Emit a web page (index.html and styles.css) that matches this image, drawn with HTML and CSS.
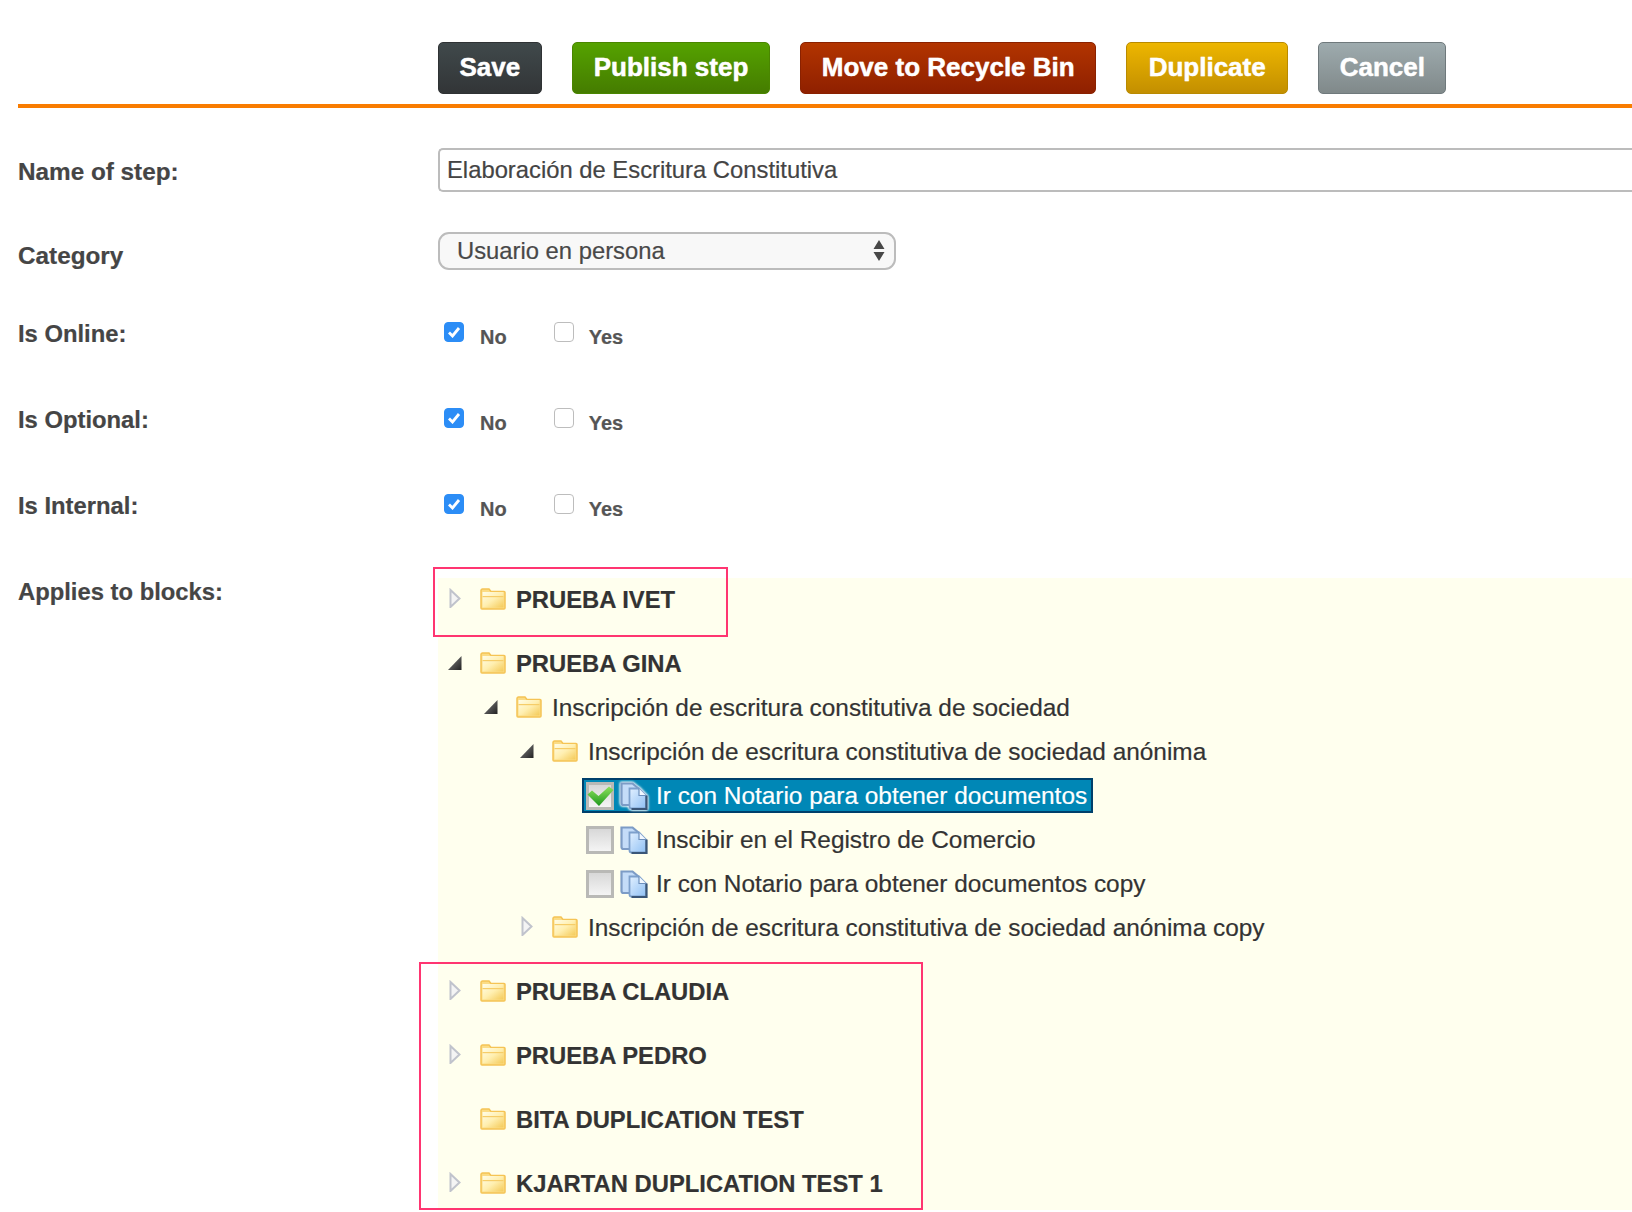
FILE: index.html
```html
<!DOCTYPE html>
<html lang="en">
<head>
<meta charset="utf-8">
<title>Edit step</title>
<link rel="stylesheet" href="styles.css">
</head>
<body>
<svg class="defs" width="0" height="0" aria-hidden="true">
  <defs>
    <linearGradient id="gFolder" x1="0" y1="0" x2="1" y2="1"><stop offset="0" stop-color="#fffde8"/><stop offset="0.5" stop-color="#ffefb0"/><stop offset="1" stop-color="#f4ca58"/></linearGradient>
    <linearGradient id="gPage" x1="0" y1="0" x2="1" y2="1"><stop offset="0" stop-color="#e2f0ff"/><stop offset="1" stop-color="#8fc0f4"/></linearGradient>
    <linearGradient id="gBox" x1="0" y1="0" x2="0" y2="1"><stop offset="0" stop-color="#d6d6d6"/><stop offset="1" stop-color="#f6f6f6"/></linearGradient>
    <linearGradient id="gCheck" x1="0" y1="0" x2="0" y2="1"><stop offset="0" stop-color="#8ee25e"/><stop offset="1" stop-color="#1d981d"/></linearGradient>
    <linearGradient id="gDark" x1="0" y1="0" x2="1" y2="1"><stop offset="0" stop-color="#888"/><stop offset="1" stop-color="#222"/></linearGradient>
    <symbol id="folder" viewBox="0 0 26 22">
      <path d="M1 20V2.500C1 1.600 1.600 1 2.500 1H9l2 2.500h13c.6 0 1 .4 1 1V20c0 .6-.4 1-1 1H2c-.6 0-1-.4-1-1z" fill="#fbdc85" stroke="#f5c455" stroke-width="1.500"/>
      <rect x="2.500" y="4" width="21" height="15.500" fill="url(#gFolder)"/>
      <rect x="2.500" y="8" width="21" height="1.200" fill="#f6cd68"/>
    </symbol>
    <symbol id="file" viewBox="0 0 28 28">
      <path d="M1.500 1.500h11L19 7v16H3.500c-1.200 0-2-.8-2-2z" fill="#c4dcf8" stroke="#7d9cc6" stroke-width="2.200"/>
      <path d="M9.500 6.500H19l7 7v13H11.500c-1.200 0-2-.8-2-2z" fill="url(#gPage)" stroke="#7da0cc" stroke-width="1.800"/>
      <path d="M26.500 13.500v13.500H11.500" fill="none" stroke="#3a5678" stroke-width="2.200"/>
      <path d="M19 6.500v7h7" fill="#f2f8ff" stroke="#6d8fbb" stroke-width="1.200"/>
    </symbol>
    <symbol id="box" viewBox="0 0 28 28">
      <rect x="1.500" y="1.500" width="25" height="25" fill="url(#gBox)" stroke="#b9b9b6" stroke-width="3"/>
    </symbol>
    <symbol id="tick" viewBox="0 0 28 28">
      <path d="M1.500 12.500l4.500-4 6.500 5.500L23 4.500l4.500 3.500L13 24z" fill="url(#gCheck)"/>
    </symbol>
    <symbol id="arrow-closed" viewBox="0 0 14 20">
      <path d="M2.500 2l9 8.500-9 8.500z" fill="#f4f4f4" stroke="#c0c3cc" stroke-width="2"/>
    </symbol>
    <symbol id="arrow-open" viewBox="0 0 14 20">
      <path d="M0 18L13.500 4v14z" fill="url(#gDark)"/>
    </symbol>
  </defs>
</svg>

<header class="toolbar">
  <button type="button" class="btn btn-save">Save</button>
  <button type="button" class="btn btn-publish">Publish step</button>
  <button type="button" class="btn btn-delete">Move to Recycle Bin</button>
  <button type="button" class="btn btn-duplicate">Duplicate</button>
  <button type="button" class="btn btn-cancel">Cancel</button>
</header>

<main class="form">
  <div class="row row-name">
    <div class="label">Name of step:</div>
    <input class="text-input" type="text" value="Elaboración de Escritura Constitutiva">
  </div>

  <div class="row row-category">
    <div class="label">Category</div>
    <div class="select">
      <span>Usuario en persona</span>
      <svg class="select-arrows" width="12" height="22" viewBox="0 0 12 22"><path d="M6 0l5.500 9H.5zM.5 12h11L6 21z"/></svg>
    </div>
  </div>

  <div class="row row-online">
    <div class="label">Is Online:</div>
    <div class="options">
      <span class="check is-on"><svg width="14" height="12" viewBox="0 0 14 12"><path d="M2 6.500l3.500 3.500L12 2" fill="none" stroke="#fff" stroke-width="2.800"/></svg></span><span class="opt-text">No</span>
      <span class="check check-yes"></span><span class="opt-text opt-yes">Yes</span>
    </div>
  </div>

  <div class="row row-optional">
    <div class="label">Is Optional:</div>
    <div class="options">
      <span class="check is-on"><svg width="14" height="12" viewBox="0 0 14 12"><path d="M2 6.500l3.500 3.500L12 2" fill="none" stroke="#fff" stroke-width="2.800"/></svg></span><span class="opt-text">No</span>
      <span class="check check-yes"></span><span class="opt-text opt-yes">Yes</span>
    </div>
  </div>

  <div class="row row-internal">
    <div class="label">Is Internal:</div>
    <div class="options">
      <span class="check is-on"><svg width="14" height="12" viewBox="0 0 14 12"><path d="M2 6.500l3.500 3.500L12 2" fill="none" stroke="#fff" stroke-width="2.800"/></svg></span><span class="opt-text">No</span>
      <span class="check check-yes"></span><span class="opt-text opt-yes">Yes</span>
    </div>
  </div>

  <div class="row row-blocks">
    <div class="label">Applies to blocks:</div>
    <div class="tree">
      <ul class="tree-list">
        <li class="root">
          <div class="node"><svg class="arrow"><use href="#arrow-closed"/></svg><svg class="folder"><use href="#folder"/></svg><span class="name">PRUEBA IVET</span></div>
        </li>
        <li class="root">
          <div class="node"><svg class="arrow"><use href="#arrow-open"/></svg><svg class="folder"><use href="#folder"/></svg><span class="name">PRUEBA GINA</span></div>
          <ul class="tree-sub">
            <li>
              <div class="node"><svg class="arrow"><use href="#arrow-open"/></svg><svg class="folder"><use href="#folder"/></svg><span>Inscripción de escritura constitutiva de sociedad</span></div>
              <ul class="tree-sub">
                <li>
                  <div class="node"><svg class="arrow"><use href="#arrow-open"/></svg><svg class="folder"><use href="#folder"/></svg><span>Inscripción de escritura constitutiva de sociedad anónima</span></div>
                  <ul class="tree-sub">
                    <li class="leaf"><div class="leaf-box is-selected"><svg class="leaf-icon"><use href="#box"/><use href="#tick"/></svg><svg class="leaf-icon file-icon"><use href="#file"/></svg><span>Ir con Notario para obtener documentos</span></div></li>
                    <li class="leaf"><div class="leaf-box"><svg class="leaf-icon"><use href="#box"/></svg><svg class="leaf-icon file-icon"><use href="#file"/></svg><span>Inscibir en el Registro de Comercio</span></div></li>
                    <li class="leaf"><div class="leaf-box"><svg class="leaf-icon"><use href="#box"/></svg><svg class="leaf-icon file-icon"><use href="#file"/></svg><span>Ir con Notario para obtener documentos copy</span></div></li>
                  </ul>
                </li>
                <li>
                  <div class="node"><svg class="arrow"><use href="#arrow-closed"/></svg><svg class="folder"><use href="#folder"/></svg><span>Inscripción de escritura constitutiva de sociedad anónima copy</span></div>
                </li>
              </ul>
            </li>
          </ul>
        </li>
        <li class="root">
          <div class="node"><svg class="arrow"><use href="#arrow-closed"/></svg><svg class="folder"><use href="#folder"/></svg><span class="name">PRUEBA CLAUDIA</span></div>
        </li>
        <li class="root">
          <div class="node"><svg class="arrow"><use href="#arrow-closed"/></svg><svg class="folder"><use href="#folder"/></svg><span class="name">PRUEBA PEDRO</span></div>
        </li>
        <li class="root">
          <div class="node"><span class="arrow"></span><svg class="folder"><use href="#folder"/></svg><span class="name">BITA DUPLICATION TEST</span></div>
        </li>
        <li class="root">
          <div class="node"><svg class="arrow"><use href="#arrow-closed"/></svg><svg class="folder"><use href="#folder"/></svg><span class="name">KJARTAN DUPLICATION TEST 1</span></div>
        </li>
      </ul>
      <div class="mark mark-one"></div>
      <div class="mark mark-two"></div>
    </div>
  </div>
</main>
</body>
</html>
```

FILE: styles.css
```css
html, body {
  margin: 0;
  padding: 0;
  overflow: hidden;
  background: #fff;
}
body {
  box-sizing: border-box;
  font-family: "Liberation Sans", Arial, sans-serif;
  font-size: 23.8px;
  color: #444;
  height: 1212px;
  padding-left: 18px;
  -webkit-text-stroke: 0.2px currentColor;
}
.defs { position: absolute; }

.toolbar {
  display: flex;
  gap: 30px;
  padding: 42px 0 10px 420px;
  border-bottom: 4px solid #f97c00;
}
.btn {
  height: 52px;
  padding: 0 20.5px 2px;
  border: 1px solid;
  border-radius: 5px;
  font: bold 26px "Liberation Sans", Arial, sans-serif;
  color: #fff;
  -webkit-text-stroke: 0.3px #fff;
  text-shadow: 0 0 1px rgba(255, 255, 255, .6);
}
.btn-save { background: linear-gradient(#40494b, #323537); border-color: #2f3234; }
.btn-publish { background: linear-gradient(#55a200, #457c00); border-color: #4a8600; padding: 0 21px 2px; }
.btn-delete { background: linear-gradient(#b23400, #8f2000); border-color: #8a2100; }
.btn-duplicate { background: linear-gradient(#edb600, #c38f00); border-color: #b98a00; padding: 0 21.5px 2px; }
.btn-cancel { background: linear-gradient(#9eabae, #80898a); border-color: #6f797c; }

.row {
  display: grid;
  grid-template-columns: 420px 1fr;
  align-items: start;
}
.row-name { margin-top: 40px; height: 44px; }
.row-category { margin-top: 40px; height: 44px; }
.row-online { margin-top: 35px; height: 44px; }
.row-optional { margin-top: 42px; height: 44px; }
.row-internal { margin-top: 42px; height: 44px; }
.row-blocks { margin-top: 42px; }

.label {
  font-weight: bold;
  line-height: 46px;
  height: 44px;
  color: #454545;
}
.row-name .label { line-height: 48px; font-size: 24.3px; }
.row-category .label { line-height: 48px; font-size: 24.3px; }

.text-input {
  box-sizing: border-box;
  width: 100%;
  height: 44px;
  padding: 0 7px;
  border: 2px solid #bcbcbc;
  border-right: 0;
  border-radius: 5px 0 0 5px;
  background: #fff;
  font: 23.8px "Liberation Sans", Arial, sans-serif;
  -webkit-text-stroke: 0.2px #444;
  color: #444;
  outline: none;
}

.select {
  box-sizing: border-box;
  display: flex;
  align-items: center;
  justify-content: space-between;
  width: 458px;
  height: 38px;
  padding: 0 9px 0 17px;
  border: 2px solid #bcbcbc;
  border-radius: 11px;
  background: #f8f8f8;
  color: #484848;
}
.select-arrows { fill: #484848; stroke: none; }

.options {
  display: flex;
  align-items: center;
  height: 44px;
  padding-left: 6px;
  color: #555;
  font-size: 20px;
  font-weight: bold;
}
.check {
  box-sizing: border-box;
  display: flex;
  align-items: center;
  justify-content: center;
  width: 20px;
  height: 20px;
  border: 1px solid #bdbdbd;
  border-radius: 4px;
  background: #fff;
  margin-top: -2px;
}
.check.is-on { background: #2c8df6; border-color: #2c8df6; }
.check-yes { margin-left: 47px; }
.opt-text { margin: 9px 0 0 16px; }
.opt-yes { margin-left: 15px; }

.tree {
  position: relative;
  margin-top: 9px;
  height: 632px;
  background: #ffffee;
  color: #333;
  font-size: 24.4px;
}
.tree-list, .tree-sub {
  list-style: none;
  margin: 0;
  padding: 0;
}
.tree-list { padding-left: 10px; }
.tree-sub { padding-left: 36px; }
.root { margin-bottom: 20px; }
.node {
  display: flex;
  align-items: center;
  height: 44px;
  white-space: nowrap;
}
.name { font-weight: bold; font-size: 23.8px; }
.arrow {
  flex: none;
  width: 14px;
  height: 20px;
  margin-top: -4px;
  margin-right: 18px;
}
.folder {
  flex: none;
  width: 26px;
  height: 22px;
  margin-right: 10px;
  margin-top: -2px;
}
.leaf {
  display: flex;
  align-items: center;
  height: 44px;
  margin-left: 26px;
}
.leaf-box {
  box-sizing: border-box;
  display: flex;
  align-items: center;
  height: 35px;
  margin-bottom: 1px;
  padding: 0 4px 0 2px;
  border: 2px solid transparent;
  white-space: nowrap;
}
.leaf-box.is-selected {
  background: #0087b6;
  border-color: #00406b;
  color: #fff;
}
.leaf-icon {
  flex: none;
  width: 28px;
  height: 28px;
  stroke: none;
}
.file-icon { margin: 0 8px 0 6px; }
.is-selected .file-icon { filter: drop-shadow(0 0 1px #fff) drop-shadow(0 0 1px #fff); }

.mark {
  position: absolute;
  box-sizing: border-box;
  border: 2px solid #ff3571;
  pointer-events: none;
}
.mark-one { left: -5px; top: -11px; width: 295px; height: 70px; }
.mark-two { left: -19px; top: 384px; width: 504px; height: 248px; }
```
